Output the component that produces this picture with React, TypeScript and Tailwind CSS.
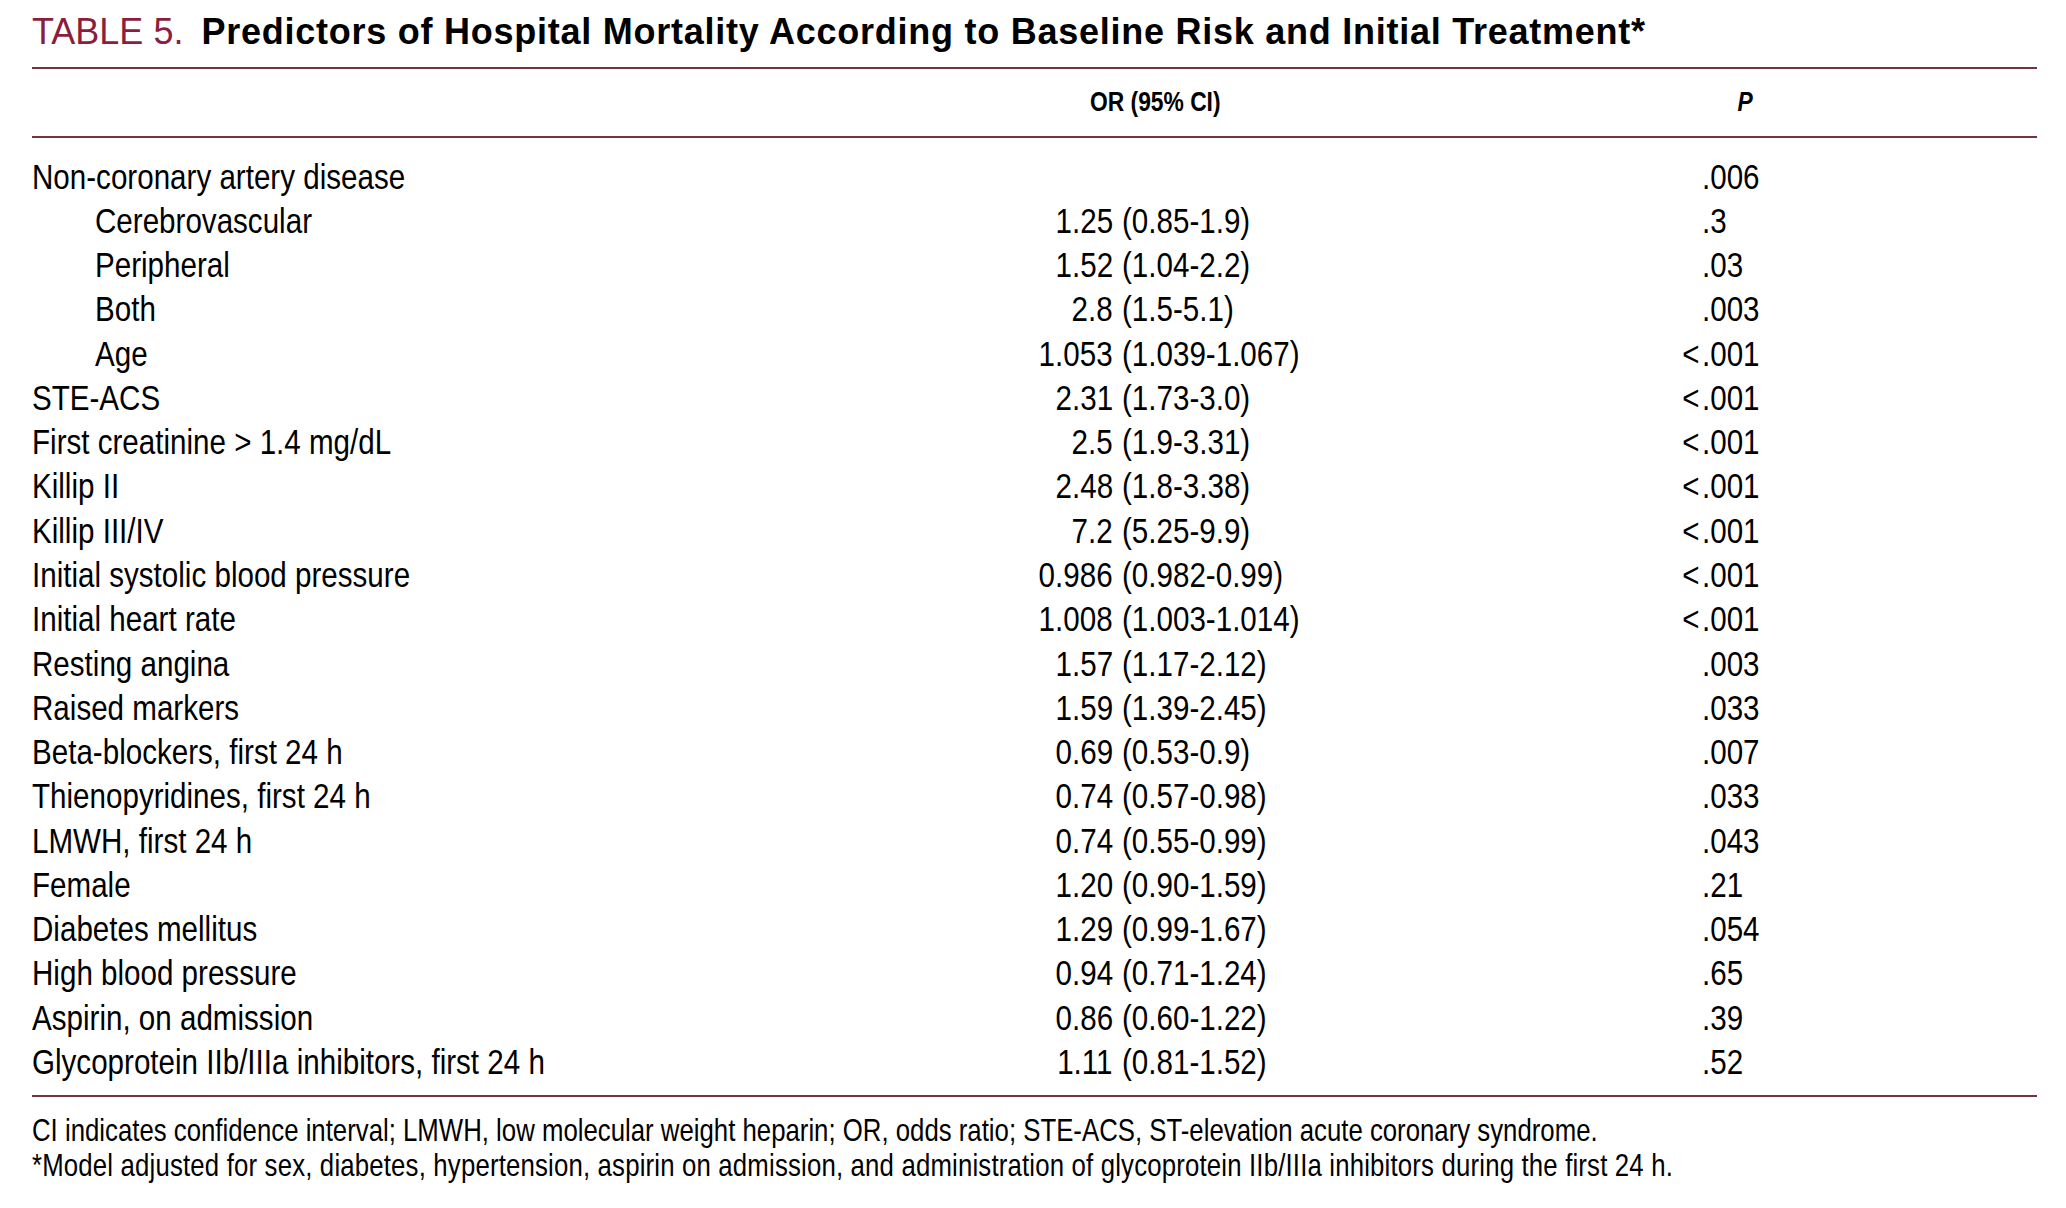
import React from "react";

type Row = { label: string; indent?: boolean; or?: [string, string]; p: [string, string] };

const rows: Row[] = [
  { label: "Non-coronary artery disease", p: ["", ".006"] },
  { label: "Cerebrovascular", indent: true, or: ["1.25", "(0.85-1.9)"], p: ["", ".3"] },
  { label: "Peripheral", indent: true, or: ["1.52", "(1.04-2.2)"], p: ["", ".03"] },
  { label: "Both", indent: true, or: ["2.8", "(1.5-5.1)"], p: ["", ".003"] },
  { label: "Age", indent: true, or: ["1.053", "(1.039-1.067)"], p: ["<", ".001"] },
  { label: "STE-ACS", or: ["2.31", "(1.73-3.0)"], p: ["<", ".001"] },
  { label: "First creatinine > 1.4 mg/dL", or: ["2.5", "(1.9-3.31)"], p: ["<", ".001"] },
  { label: "Killip II", or: ["2.48", "(1.8-3.38)"], p: ["<", ".001"] },
  { label: "Killip III/IV", or: ["7.2", "(5.25-9.9)"], p: ["<", ".001"] },
  { label: "Initial systolic blood pressure", or: ["0.986", "(0.982-0.99)"], p: ["<", ".001"] },
  { label: "Initial heart rate", or: ["1.008", "(1.003-1.014)"], p: ["<", ".001"] },
  { label: "Resting angina", or: ["1.57", "(1.17-2.12)"], p: ["", ".003"] },
  { label: "Raised markers", or: ["1.59", "(1.39-2.45)"], p: ["", ".033"] },
  { label: "Beta-blockers, first 24 h", or: ["0.69", "(0.53-0.9)"], p: ["", ".007"] },
  { label: "Thienopyridines, first 24 h", or: ["0.74", "(0.57-0.98)"], p: ["", ".033"] },
  { label: "LMWH, first 24 h", or: ["0.74", "(0.55-0.99)"], p: ["", ".043"] },
  { label: "Female", or: ["1.20", "(0.90-1.59)"], p: ["", ".21"] },
  { label: "Diabetes mellitus", or: ["1.29", "(0.99-1.67)"], p: ["", ".054"] },
  { label: "High blood pressure", or: ["0.94", "(0.71-1.24)"], p: ["", ".65"] },
  { label: "Aspirin, on admission", or: ["0.86", "(0.60-1.22)"], p: ["", ".39"] },
  { label: "Glycoprotein IIb/IIIa inhibitors, first 24 h", or: ["1.11", "(0.81-1.52)"], p: ["", ".52"] },
];

// condensed look: Arial-metric text squeezed horizontally (no narrow face installed)
function L({ children }: { children: React.ReactNode }) {
  return <span className="inline-block origin-left scale-x-[0.845] whitespace-nowrap">{children}</span>;
}
function R({ children }: { children: React.ReactNode }) {
  return <span className="inline-block origin-right scale-x-[0.845] whitespace-nowrap">{children}</span>;
}
function C({ children }: { children: React.ReactNode }) {
  return <span className="inline-block origin-center scale-x-[0.845] whitespace-nowrap">{children}</span>;
}

export default function App() {
  return (
    <div className="w-[2066px] h-[1208px] bg-white text-black pl-8 pr-[29px] pt-[10px] font-['Liberation_Sans',Arial,sans-serif]">
      {/* Title */}
      <h1 className="text-[36px] leading-[44px] h-[57px] whitespace-nowrap">
        <span className="text-[#8c1d3c]">TABLE 5.</span>
        <span className="font-bold ml-[18px] tracking-[0.75px]">
          Predictors of Hospital Mortality According to Baseline Risk and Initial Treatment*
        </span>
      </h1>

      {/* Header */}
      <div className="border-t-2 border-b-2 border-[#74343f] h-[71px] flex items-center font-bold text-[27px]">
        <div className="w-[1023px]" />
        <div className="w-[200px] text-center">
          <C>OR (95% CI)</C>
        </div>
        <div className="w-[470px]" />
        <div className="w-[40px] text-center italic">
          <C>P</C>
        </div>
      </div>

      {/* Body */}
      <div className="text-[35px] pt-[16px] pb-[11px] border-b-2 border-[#74343f]">
        {rows.map((r) => (
          <div key={r.label} className="flex items-center h-[44.27px] leading-none">
            <div className={`w-[968px] ${r.indent ? "pl-[63px]" : ""}`}>
              <L>{r.label}</L>
            </div>
            <div className="w-[113px] text-right">{r.or && <R>{r.or[0]}</R>}</div>
            <div className="w-[527px] pl-[9px]">{r.or && <L>{r.or[1]}</L>}</div>
            <div className="w-[62px] pr-[3px] text-right">{r.p[0] && <R>{r.p[0]}</R>}</div>
            <div>
              <L>{r.p[1]}</L>
            </div>
          </div>
        ))}
      </div>

      {/* Footnotes */}
      <div className="text-[30.5px] leading-[35px] pt-[16px]">
        <p>
          <L>CI indicates confidence interval; LMWH, low molecular weight heparin; OR, odds ratio; STE-ACS, ST-elevation acute coronary syndrome.</L>
        </p>
        <p className="tracking-[0.2px]">
          <L>*Model adjusted for sex, diabetes, hypertension, aspirin on admission, and administration of glycoprotein IIb/IIIa inhibitors during the first 24 h.</L>
        </p>
      </div>
    </div>
  );
}
